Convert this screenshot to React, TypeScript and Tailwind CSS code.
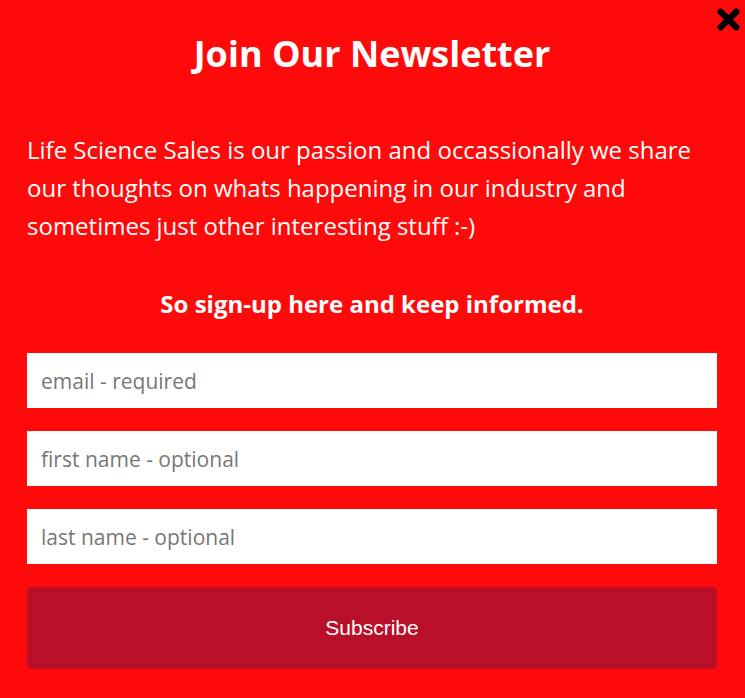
const fieldClass =
  'h-[55px] w-full bg-white px-[14px] text-[21px] text-gray-700 outline-none placeholder:text-[#777]'

export default function App() {
  return (
    <div className="relative min-h-[698px] w-[745px] bg-[#ff0a0a] pt-[28px] pr-[28px] pl-[27px] font-['Open_Sans',sans-serif] text-white">
      <button type="button" className="absolute top-[7px] right-[4px] h-[25px] w-[25px]" aria-label="close">
        <svg viewBox="0 0 24 24" className="h-full w-full">
          <path d="M4.5 4.5 L19.5 19.5 M19.5 4.5 L4.5 19.5" stroke="#000" strokeWidth="6" strokeLinecap="round" />
        </svg>
      </button>

      <h1 className="text-center text-[36px] leading-[52px] font-bold">Join Our Newsletter</h1>

      <p className="mt-[51px] text-[24px] leading-[38px] whitespace-nowrap">
        Life Science Sales is our passion and occassionally we share
        <br />
        our thoughts on whats happening in our industry and
        <br />
        sometimes just other interesting stuff :-)
      </p>

      <p className="mt-[43px] text-center text-[24px] leading-[32px] font-bold">So sign-up here and keep informed.</p>

      <form className="mt-[33px] flex flex-col gap-[23px]" onSubmit={(e) => e.preventDefault()}>
        <input className={fieldClass} placeholder="email - required" />
        <input className={fieldClass} placeholder="first name - optional" />
        <input className={fieldClass} placeholder="last name - optional" />
        <button
          type="submit"
          className="h-[82px] w-full rounded-[3px] bg-[#b81028] font-['Liberation_Sans',Arial,sans-serif] text-[21px] text-white"
        >
          Subscribe
        </button>
      </form>
    </div>
  )
}
